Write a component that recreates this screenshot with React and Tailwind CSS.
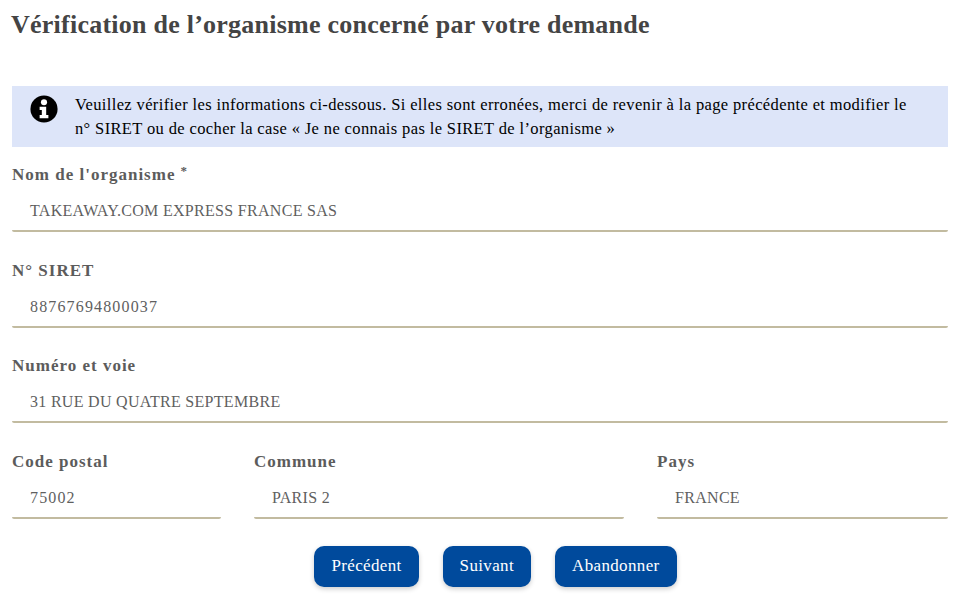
import React from 'react'

function Field({ label, value, required, numeric, className }) {
  return (
    <div className={className}>
      <div className="h-[24px] text-[17px] leading-[24px] font-bold text-[#5c5c5c] tracking-[1px]">
        {label}
        {required && <span className="relative -top-[5px] ml-[5px] text-[13px] leading-none">*</span>}
      </div>
      <div
        className={
          numeric
            ? 'mt-[5px] flex h-[40px] items-center rounded-[2px] border-b-2 border-[#c2bba0] pl-[18px] text-[16px] text-[#5f5f5f] tracking-[1.15px]'
            : 'mt-[5px] flex h-[40px] items-center rounded-[2px] border-b-2 border-[#c2bba0] pl-[18px] text-[16px] text-[#5f5f5f] tracking-[0.3px]'
        }
      >
        {value}
      </div>
    </div>
  )
}

function InfoIcon() {
  return (
    <svg viewBox="0 0 512 512" className="h-[28px] w-[28px] shrink-0">
      <circle cx="256" cy="256" r="248" fill="#000" />
      <circle cx="256" cy="132" r="56" fill="#fff" />
      <path fill="#fff" d="M176 216h120v150h40v60H176v-60h40v-90h-40z" />
    </svg>
  )
}

function Btn({ children }) {
  return (
    <button className="h-[41px] rounded-[10px] bg-[#004a9c] px-[17px] text-[17px] tracking-[0.35px] text-white shadow-[0_2px_5px_rgba(0,0,0,0.2)]">
      {children}
    </button>
  )
}

export default function App() {
  return (
    <div className="min-h-[599px] bg-white pl-[12px] pr-[13px] font-['Liberation_Serif',serif]">
      <h1 className="-ml-px pt-[10px] text-[26px] leading-[30px] font-bold tracking-[0.24px] text-[#444]">
        Vérification de l’organisme concerné par votre demande
      </h1>

      <div className="mt-[46px] flex h-[61px] items-start bg-[#dde5f9] pl-[18px] pt-[7px] text-[16.5px] leading-[24px] tracking-[0.37px] text-black">
        <div className="pt-[2px]">
          <InfoIcon />
        </div>
        <p className="ml-[17px] whitespace-nowrap">
          Veuillez vérifier les informations ci-dessous. Si elles sont erronées, merci de revenir à la page précédente et modifier le
          <br />
          n° SIRET ou de cocher la case « Je ne connais pas le SIRET de l’organisme »
        </p>
      </div>

      <div className="mt-[16px] flex flex-col gap-[26.5px]">
        <Field label="Nom de l'organisme" value="TAKEAWAY.COM EXPRESS FRANCE SAS" required />
        <Field label="N° SIRET" value="88767694800037" numeric />
        <Field label="Numéro et voie" value="31 RUE DU QUATRE SEPTEMBRE" />
        <div className="flex gap-[33px]">
          <Field className="w-[209px]" label="Code postal" value="75002" numeric />
          <Field className="w-[370px]" label="Commune" value="PARIS 2" />
          <Field className="flex-1" label="Pays" value="FRANCE" />
        </div>
      </div>

      <div className="mt-[27px] flex justify-center gap-[24px] pl-[31px]">
        <Btn>Précédent</Btn>
        <Btn>Suivant</Btn>
        <Btn>Abandonner</Btn>
      </div>
    </div>
  )
}
